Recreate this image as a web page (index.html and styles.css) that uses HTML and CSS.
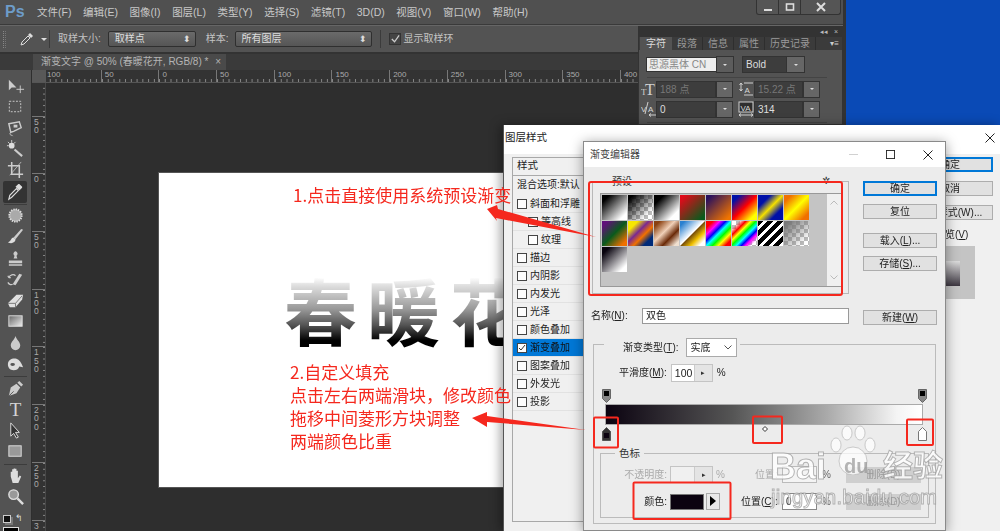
FILE: index.html
```html
<!DOCTYPE html>
<html lang="zh">
<head>
<meta charset="utf-8">
<title>渐变编辑器</title>
<link rel="stylesheet" href="styles.css">
</head>
<body>
<div class="desktop">

  <section class="ps">
    <header class="menubar">
      <span class="logo">Ps</span>
      <nav class="menu">
        <span>文件(F)</span><span>编辑(E)</span><span>图像(I)</span><span>图层(L)</span><span>类型(Y)</span><span>选择(S)</span><span>滤镜(T)</span><span>3D(D)</span><span>视图(V)</span><span>窗口(W)</span><span>帮助(H)</span>
      </nav>
      <div class="winctl">
        <span class="wc"><svg viewBox="0 0 10 10" width="10" height="10"><rect x="1" y="7" width="8" height="2" fill="#ddd"/></svg></span>
        <span class="wc"><svg viewBox="0 0 10 10" width="10" height="10"><rect x="1.5" y="2" width="7" height="6" fill="none" stroke="#ddd" stroke-width="1.6"/></svg></span>
        <span class="wc wc-x"><svg viewBox="0 0 10 10" width="10" height="10"><path d="M1 1l8 8M9 1l-8 8" stroke="#ddd" stroke-width="2"/></svg></span>
      </div>
    </header>

    <div class="optbar">
      <span class="grip"></span>
      <svg class="opt-drop" viewBox="0 0 14 14" width="14" height="14"><path d="M1 13l1-3 6-6 2 2-6 6z" fill="none" stroke="#ddd"/><path d="M8 3l2-2 3 3-2 2z" fill="#ddd"/></svg>
      <span class="caret"></span>
      <span class="vsep"></span>
      <span class="opt-label">取样大小:</span>
      <span class="opt-select opt-size">取样点</span>
      <span class="opt-label opt-sample">样本:</span>
      <span class="opt-select opt-layers">所有图层</span>
      <span class="vsep vsep-b"></span>
      <span class="opt-check"><svg viewBox="0 0 11 11" width="11" height="11"><path d="M2 5l3 3 5-7" fill="none" stroke="#ccc" stroke-width="1.4"/></svg></span>
      <span class="opt-label">显示取样环</span>
    </div>

    <div class="work">
      <aside class="tools">
        <div class="tools-top">▸▸</div>
        <div class="tools-grip"></div>
        <div class="tool"><svg viewBox="0 0 20 20"><path d="M3 4v11l3-3 5 0z" fill="#ccc"/><path d="M15 10v8M11 14h8" stroke="#ccc"/></svg></div>
        <div class="tool"><svg viewBox="0 0 20 20"><rect x="3.5" y="4.5" width="12" height="11" fill="none" stroke="#ccc" stroke-dasharray="2 1.5"/></svg></div>
        <div class="tool"><svg viewBox="0 0 20 20"><path d="M3 5l11-2 2 6-8 4-3 1z" fill="none" stroke="#ccc" stroke-width="1.5"/><path d="M5 14c-2 2 0 3 1 3l1 1" fill="none" stroke="#ccc"/><path d="M8 6h4v3H8z" fill="#ccc"/></svg></div>
        <div class="tool"><svg viewBox="0 0 20 20"><path d="M9 10l8 7" stroke="#ccc" stroke-width="2.2"/><circle cx="6" cy="6" r="3" fill="#ddd"/><path d="M6 0v3M1 6h2M2 2l2 2M10 2L8 4" stroke="#ccc"/></svg></div>
        <div class="tool"><svg viewBox="0 0 20 20"><path d="M6 1v13h12M2 5h12v13" fill="none" stroke="#ccc" stroke-width="1.6"/><path d="M16 1L4 15" stroke="#ccc" stroke-width=".8"/></svg></div>
        <div class="tool tool-on"><svg viewBox="0 0 20 20"><path d="M3 18l1-4 7-7 2 2-7 7z" fill="none" stroke="#ddd" stroke-width="1.2"/><path d="M10 5l3-3 1 0 3 3 0 1-3 3z" fill="#ddd"/></svg></div>
        <div class="tool-sep"></div>
        <div class="tool"><svg viewBox="0 0 20 20"><circle cx="10" cy="10" r="6.5" fill="#aaa" stroke="#ddd" stroke-width="2" stroke-dasharray="1.5 1"/></svg></div>
        <div class="tool"><svg viewBox="0 0 20 20"><path d="M16 2L8 11l2 2 8-10z" fill="#ccc"/><path d="M8 11c-3 0-2 4-6 5 3 2 8 1 8-3z" fill="#ddd"/></svg></div>
        <div class="tool"><svg viewBox="0 0 20 20"><path d="M8 10h4l-1-3a2 2.4 0 1 0-2 0zM3 12h14v3H3zM3 16h14v1.600H3z" fill="#ccc"/></svg></div>
        <div class="tool"><svg viewBox="0 0 20 20"><path d="M14 4L7 15l3 1 7-11z" fill="#ccc"/><path d="M3 8c1-3 5-4 7-2M3 8l-1-2M3 8l2 0M2 13c1 2 3 3 5 2" fill="none" stroke="#ccc" stroke-width="1.3"/></svg></div>
        <div class="tool"><svg viewBox="0 0 20 20"><path d="M2 13l9-9h7l-1 5-7 8H4z" fill="#e0e0e0"/><path d="M2 13h8l7-8M10 13v4" fill="none" stroke="#777"/></svg></div>
        <div class="tool"><svg viewBox="0 0 20 20"><defs><linearGradient id="gt" x1="0" x2="1" y1="0" y2="1"><stop offset="0" stop-color="#666"/><stop offset="1" stop-color="#eee"/></linearGradient></defs><rect x="3" y="4" width="14" height="11" fill="url(#gt)" stroke="#ddd"/></svg></div>
        <div class="tool"><svg viewBox="0 0 20 20"><path d="M10 2c1 4 5 6 5 10a5 5 0 0 1-10 0c0-4 4-6 5-10z" fill="#ccc"/></svg></div>
        <div class="tool"><svg viewBox="0 0 20 20"><path d="M2 10c0-5 5-7 9-6 3 1 5 4 7 9l-4-1c-1 3-3 4-6 4-4 0-6-3-6-6z" fill="#ddd"/><ellipse cx="7" cy="10" rx="2.400" ry="1.500" fill="#555"/></svg></div>
        <div class="tool-sep"></div>
        <div class="tool"><svg viewBox="0 0 20 20"><path d="M3 18l2-9 6-4 4 4-4 6z" fill="#ccc"/><path d="M12 4l2-2 4 4-2 2z" fill="#ccc"/><path d="M3 18l5-5" stroke="#555"/></svg></div>
        <div class="tool"><svg viewBox="0 0 20 20"><text x="10" y="17" class="tool-t">T</text></svg></div>
        <div class="tool"><svg viewBox="0 0 20 20"><path d="M5 2v14l3-3 3 5 2-1-3-5h4z" fill="#333" stroke="#ddd"/></svg></div>
        <div class="tool"><svg viewBox="0 0 20 20"><rect x="3" y="4" width="13" height="11" fill="#999" stroke="#ddd"/></svg></div>
        <div class="tool-sep"></div>
        <div class="tool"><svg viewBox="0 0 20 20"><path d="M5 11V6h1.500v4V3.500H8V9V2.500h1.500V9V3h1.500v7V5h1.500v8l2-3 1.500 1-3 7H7z" fill="#ddd"/></svg></div>
        <div class="tool"><svg viewBox="0 0 20 20"><circle cx="8" cy="8" r="5" fill="#999" stroke="#ddd" stroke-width="1.500"/><path d="M12 12l6 6" stroke="#ddd" stroke-width="2.500"/></svg></div>
        <div class="colors">
          <div class="colors-small"><span class="mini-sw"></span><span class="mini-arrow">↰</span></div>
          <div class="fg"></div>
        </div>
      </aside>

      <div class="stage">
        <div class="rule-h-row">
          <div class="rule-corner"></div>
          <div class="rule-h">
            <span>100</span><span>50</span><span>0</span><span>50</span><span>100</span><span>150</span><span>200</span><span>250</span><span>300</span><span>350</span><span>400</span>
          </div>
        </div>
        <div class="stage-body">
          <div class="rule-v">
            <span></span><span>50</span><span>0</span><span>50</span><span>100</span><span>150</span><span>200</span><span>250</span><span>300</span>
          </div>
          <div class="canvas">
            <div class="doc"><div class="doc-title">春暖花</div></div>
          </div>
        </div>
      </div>
    </div>

    <div class="tabrow"><div class="tab">渐变文字 @ 50% (春暖花开, RGB/8) * <b>×</b></div></div>

    <aside class="charpanel">
      <div class="cp-top">◂◂&nbsp;&nbsp; ×</div>
      <div class="cp-tabs"><span class="cp-on">字符</span><span>段落</span><span>信息</span><span>属性</span><span>历史记录</span><i>▾≡</i></div>
      <div class="cp-row cp-r1">
        <span class="cp-font">思源黑体 CN</span><span class="cp-btn cp-btn-f"></span>
        <span class="cp-weight">Bold</span><span class="cp-btn cp-btn-w"></span>
      </div>
      <div class="cp-rule"></div>
      <div class="cp-row cp-r2">
        <svg class="cp-ic" viewBox="0 0 16 16" width="16" height="16"><text x="0" y="14" class="cp-t-s">T</text><text x="4" y="14" class="cp-t-b">T</text></svg>
        <span class="cp-in cp-dim">188 点</span><span class="cp-btn"></span>
        <svg class="cp-ic cp-ic2" viewBox="0 0 17 16" width="17" height="16"><path d="M3 2v8M1.500 4L3 2l1.500 2M1.500 8L3 10l1.500-2M6 2h9M6 14h9" stroke="#d0d0d0" fill="none"/><text x="6.500" y="12" class="cp-va">A</text></svg>
        <span class="cp-in cp-in2 cp-dim">15.22 点</span><span class="cp-btn"></span>
      </div>
      <div class="cp-row cp-r3">
        <svg class="cp-ic" viewBox="0 0 16 16" width="16" height="16"><text x="0" y="11" class="cp-va">V</text><text x="7" y="11" class="cp-va">A</text><path d="M7 1L4 13M8 14h7M8 14l2-1.500M8 14l2 1.500" stroke="#d0d0d0" fill="none"/></svg>
        <span class="cp-in">0</span><span class="cp-btn"></span>
        <svg class="cp-ic cp-ic2" viewBox="0 0 17 16" width="17" height="16"><rect x="1" y="1" width="14" height="10" fill="#2e2e2e" stroke="#d0d0d0"/><text x="2.500" y="9.500" class="cp-va">VA</text><path d="M1 14h14M1 14l2-1.500M1 14l2 1.500M15 14l-2-1.500M15 14l-2 1.500" stroke="#d0d0d0" fill="none"/></svg>
        <span class="cp-in cp-in2">314</span><span class="cp-btn"></span>
      </div>
      <div class="cp-rule"></div>
    </aside>
  </section>

  <div class="blue"></div>

  <section class="dlg-layer">
    <div class="dl-title"><span>图层样式</span><svg viewBox="0 0 10 10" width="10" height="10"><path d="M.5.5l9 9M9.500.5l-9 9" stroke="#222"/></svg></div>
    <div class="dl-body">
      <div class="dl-list">
        <div class="dl-head">样式</div>
        <div class="dl-blend">混合选项:默认</div>
        <div class="dl-item"><i class="cb"></i>斜面和浮雕</div>
        <div class="dl-item dl-sub"><i class="cb"></i>等高线</div>
        <div class="dl-item dl-sub"><i class="cb"></i>纹理</div>
        <div class="dl-item"><i class="cb"></i>描边</div>
        <div class="dl-item"><i class="cb"></i>内阴影</div>
        <div class="dl-item"><i class="cb"></i>内发光</div>
        <div class="dl-item"><i class="cb"></i>光泽</div>
        <div class="dl-item"><i class="cb"></i>颜色叠加</div>
        <div class="dl-item dl-on"><i class="cb cb-on"><svg viewBox="0 0 8 8" width="8" height="8"><path d="M1 4l2 2 4-5" fill="none" stroke="#333"/></svg></i>渐变叠加</div>
        <div class="dl-item"><i class="cb"></i>图案叠加</div>
        <div class="dl-item"><i class="cb"></i>外发光</div>
        <div class="dl-item"><i class="cb"></i>投影</div>
      </div>
      <div class="dl-side">
        <button class="btn btn-main dl-btn">确定</button>
        <button class="btn dl-btn">取消</button>
        <button class="btn dl-btn">新建样式(W)...</button>
        <div class="dl-prev-label">预览(<u>V</u>)</div>
        <div class="dl-prev"><div class="dl-prev-in"></div></div>
      </div>
    </div>
  </section>

  <section class="dlg-grad">
    <div class="dg-title">
      <span class="dg-name">渐变编辑器</span>
      <svg class="dg-min" viewBox="0 0 10 10" width="9" height="9"><path d="M0 5h10" stroke="#ccc"/></svg>
      <svg class="dg-max" viewBox="0 0 10 10" width="9" height="9"><rect x=".5" y=".5" width="9" height="9" fill="none" stroke="#222"/></svg>
      <svg class="dg-close" viewBox="0 0 10 10" width="10" height="10"><path d="M.5.5l9 9M9.500.5l-9 9" stroke="#222"/></svg>
    </div>
    <div class="dg-body">
      <div class="dg-top">
        <div class="dg-left">
          <div class="presets">
            <span class="presets-label">预设</span>
            <span class="presets-gear">✲</span>
            <div class="presets-list">
              <div class="swatches">
                <i class="s s1"></i><i class="s s2"></i><i class="s s3"></i><i class="s s4"></i><i class="s s5"></i><i class="s s6"></i><i class="s s7"></i><i class="s s8"></i>
                <i class="s s9"></i><i class="s s10"></i><i class="s s11"></i><i class="s s12"></i><i class="s s13"></i><i class="s s14"></i><i class="s s15"></i><i class="s s16"></i>
                <i class="s s17"></i>
              </div>
              <div class="scroll">
                <svg viewBox="0 0 8 5" width="8" height="5"><path d="M.5 4.500L4 1l3.500 3.500" fill="none" stroke="#bbb"/></svg>
                <svg viewBox="0 0 8 5" width="8" height="5"><path d="M.5.500L4 4 7.500.500" fill="none" stroke="#bbb"/></svg>
              </div>
            </div>
          </div>
          <div class="name-row">
            <span>名称(<u>N</u>):</span>
            <span class="name-in">双色</span>
          </div>
        </div>
        <div class="dg-right">
          <button class="btn btn-main">确定</button>
          <button class="btn b-reset">复位</button>
          <button class="btn b-load">载入(<u>L</u>)...</button>
          <button class="btn b-save">存储(<u>S</u>)...</button>
          <button class="btn b-new">新建(<u>W</u>)</button>
        </div>
      </div>

      <div class="grad-group">
        <div class="type-row">
          <span>渐变类型(<u>T</u>):</span>
          <span class="type-select">实底<svg viewBox="0 0 8 5" width="8" height="5"><path d="M.5.5L4 4 7.500.5" fill="none" stroke="#555"/></svg></span>
        </div>
        <div class="smooth-row">
          <span>平滑度(<u>M</u>):</span>
          <span class="spin"><span class="spin-v">100</span><span class="spin-b">▸</span></span>
          <span>%</span>
        </div>
        <div class="slider">
          <svg class="stop stop-tl" viewBox="0 0 9 14" width="9" height="14"><path d="M.5.5h8v9l-4 4-4-4z" fill="#888" stroke="#666"/><rect x="2" y="2" width="5" height="5" fill="#000"/></svg>
          <svg class="stop stop-tr" viewBox="0 0 9 14" width="9" height="14"><path d="M.5.5h8v9l-4 4-4-4z" fill="#888" stroke="#666"/><rect x="2" y="2" width="5" height="5" fill="#000"/></svg>
          <div class="gbar"></div>
          <svg class="stop stop-bl" viewBox="0 0 9 14" width="9" height="14"><path d="M.5 13.500v-9l4-4 4 4v9z" fill="#333" stroke="#555"/><rect x="2" y="6" width="5" height="5" fill="#0b0310"/></svg>
          <svg class="stop stop-br" viewBox="0 0 9 14" width="9" height="14"><path d="M.5 13.500v-9l4-4 4 4v9z" fill="#fff" stroke="#777"/></svg>
          <svg class="stop stop-mid" viewBox="0 0 6 6" width="6" height="6"><path d="M3 .5L5.500 3 3 5.500.5 3z" fill="#fff" stroke="#333"/></svg>
        </div>
        <div class="stops-group">
          <div class="stops-label">色标</div>
          <div class="stops-row stops-dim">
            <span class="sr-label">不透明度:</span>
            <span class="spin spin-d"><span class="spin-v"></span><span class="spin-b">▸</span></span>
            <span class="sr-pct">%</span>
            <span class="sr-pos">位置:</span>
            <span class="sr-in"></span>
            <span class="sr-pct2">%</span>
            <span class="sr-del">删除(D)</span>
          </div>
          <div class="stops-row">
            <span class="sr-label sr-color">颜色:</span>
            <span class="color-sw"></span>
            <span class="color-arrow"></span>
            <span class="sr-pos sr-pos-on">位置(<u>C</u>):</span>
            <span class="sr-in sr-in-on">0</span>
            <span class="sr-pct2">%</span>
            <span class="sr-del">删除(D)</span>
          </div>
        </div>
      </div>
    </div>
  </section>

  <div class="notes">
    <p class="note note-1">1.点击直接使用系统预设渐变</p>
    <p class="note note-2">2.自定义填充<br>点击左右两端滑块，修改颜色<br>拖移中间菱形方块调整<br>两端颜色比重</p>
    <svg class="marks" viewBox="0 0 1000 531" width="1000" height="531">
      <g fill="none" stroke="#f5281e" stroke-width="2">
        <rect x="589" y="182" width="253" height="113" rx="2"/>
        <rect x="594" y="417.500" width="24" height="30" rx="1"/>
        <rect x="753" y="416.500" width="29" height="26.500" rx="1"/>
        <rect x="907" y="419.500" width="26" height="25.500" rx="1"/>
        <rect x="633.500" y="482.500" width="97" height="36.500" rx="1"/>
      </g>
      <g fill="#f5281e">
        <path d="M487 209l10-4 1 4 98 28-100-19 1 3z"/>
        <path d="M472 418l15-6 0 4 99 14-99-8 0 5z"/>
      </g>
    </svg>
    <div class="wm">
      <svg class="wm-paw" viewBox="0 0 48 50" width="48" height="50">
        <g fill="rgba(255,255,255,.72)" stroke="rgba(165,165,165,.55)">
          <ellipse cx="8" cy="20" rx="5" ry="7"/>
          <ellipse cx="19" cy="8" rx="5" ry="7"/>
          <ellipse cx="32" cy="8" rx="5" ry="7"/>
          <ellipse cx="42" cy="20" rx="5" ry="7"/>
          <circle cx="25" cy="36" r="14"/>
        </g>
      </svg>
      <span class="wm-bai">Bai</span>
      <span class="wm-du">du</span>
      <span class="wm-jy">经验</span>
      <span class="wm-url">jingyan.baidu.com</span>
    </div>
  </div>
</div>
</body>
</html>
```

FILE: styles.css
```css
* { box-sizing: border-box; }
html, body { margin: 0; height: 100%; overflow: hidden; }
body { font: 10px/1.2 "Liberation Sans", "Noto Sans CJK SC", sans-serif; color: #222; background: #0a4ab6; }
.desktop { position: relative; width: 1000px; height: 531px; overflow: hidden; filter: blur(.45px); }
u { text-decoration: underline; }
p { margin: 0; }

/* desktop background */
.blue { position: absolute; left: 846px; top: 0; width: 154px; height: 125px; background: #0a4ab6; }

/* Photoshop window */
.ps { position: absolute; left: 0; top: 0; width: 846px; height: 531px; background: #535353; color: #c4c4c4; border-right: 3px solid #333; display: flex; flex-direction: column; overflow: hidden; }
.menubar { height: 25px; background: #505050; display: flex; align-items: center; border-bottom: 1px solid #3a3a3a; flex: none; }
.logo { width: 37px; padding-left: 5px; font: bold 16px/1 "Liberation Sans", sans-serif; color: #6d9cc9; }
.menu { display: flex; gap: 11.6px; font-size: 10.5px; color: #c8c8c8; }
.winctl { margin-left: auto; margin-right: 2px; margin-top: -10px; height: 15px; display: flex; border: 1px solid #333; border-top: 0; border-radius: 0 0 3px 3px; background: #555; }
.wc { width: 22px; display: flex; align-items: center; justify-content: center; border-right: 1px solid #333; }
.wc-x { width: 39px; border: 0; }

.optbar { height: 29px; flex: none; display: flex; align-items: center; border-top: 1px solid #666; border-bottom: 2px solid #333; background: #535353; }
.grip { width: 3px; height: 17px; margin-left: 3px; border-left: 1px dotted #888; border-right: 1px dotted #777; }
.opt-drop { margin-left: 14px; }
.caret { width: 0; height: 0; margin-left: 7px; border: 3px solid transparent; border-top-color: #ddd; border-bottom: 0; }
.vsep { width: 1px; height: 18px; margin: 0 8px 0 2px; background: #3b3b3b; }
.vsep-b { margin: 0 8px; }
.opt-label { color: #c4c4c4; }
.opt-select { height: 16px; margin-left: 7px; padding-left: 6px; line-height: 14px; background: linear-gradient(#6a6a6a, #555); border: 1px solid #2f2f2f; border-radius: 2px; color: #ddd; position: relative; }
.opt-select::after { content: "⬍"; position: absolute; right: 4px; top: 0; font-size: 9px; color: #ddd; }
.opt-size { width: 88px; }
.opt-sample { margin-left: 10px; }
.opt-layers { width: 137px; margin-left: 6px; }
.opt-check { width: 12px; height: 12px; margin-right: 3px; background: #444; border: 1px solid #333; display: flex; }

.work { flex: 1; display: flex; min-height: 0; }
.tools { width: 32px; flex: none; background: #535353; border-right: 1px solid #2e2e2e; }
.tools-top { height: 8px; background: #2f2f2f; font-size: 5px; line-height: 7px; color: #bbb; padding-left: 3px; margin-bottom: 2px; margin-top: 0; }
.tools-grip { height: 3px; margin: 0 7px 8px; border-top: 1px dotted #888; border-bottom: 1px dotted #777; }
.tool { height: 21.25px; display: flex; align-items: center; justify-content: center; }
.tool svg { width: 19px; height: 19px; }
.tool-t { font: 20px "Liberation Serif", serif; fill: #d4d4d4; text-anchor: middle; }
.tool-on { margin: 0 4px 0 3px; background: #333; border-radius: 2px; }
.tool-sep { height: 1px; margin: 1px 4px .5px; background: #3c3c3c; }
.colors { padding: 6px 0 0 3px; }
.colors-small { height: 10px; display: flex; align-items: center; gap: 4px; }
.mini-sw { width: 8px; height: 8px; background: #111; border: 1px solid #ccc; box-shadow: 2px 2px 0 #777; }
.mini-arrow { font-size: 9px; color: #ddd; }
.fg { width: 16px; height: 14px; margin-top: 3px; background: #000; border: 1px solid #ddd; }

.stage { flex: 1; min-width: 0; display: flex; flex-direction: column; margin-top: 16px; background: #2e2e2e; }
.rule-h-row { height: 13px; flex: none; display: flex; background: #333; border-bottom: 1px solid #555; }
.rule-corner { width: 14px; background: #585858; flex: none; }
.rule-h { flex: 1; display: flex; overflow: hidden; margin-left: 0; }
.rule-h span { flex: 0 0 57.7px; padding-left: 3px; margin-left: 0; font-size: 8px; line-height: 9px; color: #aaa; border-left: 1px solid #777; background: linear-gradient(to right, #888 1px, transparent 1px) left bottom / 5.77px 3px repeat-x; }
.rule-h span:first-child { margin-left: -3px; }
.stage-body { flex: 1; min-height: 0; display: flex; }
.rule-v { width: 14px; flex: none; background: #333; border-right: 1px solid #484848; overflow: hidden; }
.rule-v span { display: block; height: 57.7px; width: 14px; padding: 1px 5px 0 2px; font-size: 8.500px; line-height: 8.300px; color: #aaa; word-break: break-all; border-top: 1px solid #777; background: linear-gradient(#888 1px, transparent 1px) right top / 3px 5.77px repeat-y; }
.rule-v span:first-child { margin-top: -25px; }
.canvas { flex: 1; min-width: 0; padding: 90px 0 0 113px; background: #2e2e2e; }
.doc { width: 600px; height: 314px; background: #fff; padding: 92px 0 0 125px; white-space: nowrap; box-shadow: 0 0 0 1px #555; }
.doc-title { font: 700 73px/1.2 "Noto Sans CJK SC", sans-serif; letter-spacing: 10px; width: max-content; color: transparent; background: linear-gradient(#fff 14%, #ddd 24%, #999 50%, #555 68%, #000 86%); -webkit-background-clip: text; background-clip: text; }

.tabrow { position: absolute; left: 0; top: 54px; width: 846px; height: 16px; background: #3a3a3a; padding-left: 33px; }
.tab { width: 193px; height: 16px; background: #4a4a4a; color: #b4b4b4; font-size: 10px; line-height: 16px; padding-left: 8px; white-space: nowrap; overflow: hidden; }
.tab b { font-weight: 400; margin-left: 4px; }

/* character panel */
.charpanel { position: absolute; left: 638px; top: 26px; width: 205px; height: 99px; background: #535353; border: 1px solid #333; border-top: 0; }
.cp-top { height: 11px; background: #333; color: #bbb; font-size: 7px; line-height: 12px; text-align: right; padding-right: 4px; }
.cp-tabs { height: 13px; background: #3b3b3b; display: flex; font-size: 10px; line-height: 13px; color: #9a9a9a; padding-left: 1px; }
.cp-tabs span { padding: 0 5px; border-right: 1px solid #2e2e2e; }
.cp-tabs .cp-on { background: #535353; color: #ddd; padding: 0 6px; border: 0; }
.cp-tabs i { margin-left: auto; padding-right: 3px; font-style: normal; color: #ccc; font-size: 8px; }
.cp-row { display: flex; align-items: center; }
.cp-r1 { margin: 7px 0 0 8px; height: 15px; }
.cp-font { width: 70px; height: 13px; background: #eee; color: #888; font-size: 10px; line-height: 13px; padding-left: 2px; outline: 1px solid #333; }
.cp-btn { width: 15px; height: 15px; margin-left: 2px; background: #666; flex: none; display: flex; align-items: center; justify-content: center; outline: 1px solid #333; }
.cp-btn::after { content: ""; border: 2.500px solid transparent; border-top-color: #ddd; border-bottom: 0; }
.cp-btn-f { width: 16px; background: #5c5c5c; margin: 0 10px 0 0; }
.cp-btn-w { width: 17px; margin-left: 0; }
.cp-weight { width: 44px; height: 15px; background: #3d3d3d; color: #ddd; font-size: 10px; line-height: 15px; padding-left: 3px; outline: 1px solid #333; }
.cp-rule { height: 1px; margin: 5px 15px 0 8px; background: #444; }
.cp-r2 { margin: 3px 0 0 2px; height: 16px; }
.cp-r3 { margin: 4px 0 0 2px; height: 16px; }
.cp-ic { flex: none; }
.cp-ic2 { margin-left: 6px; }
.cp-t-s { font: 9px "Liberation Serif", serif; fill: #d0d0d0; }
.cp-t-b { font: 16px "Liberation Serif", serif; fill: #d0d0d0; }
.cp-va { font: 8px "Liberation Sans", sans-serif; fill: #d8d8d8; }
.cp-in { width: 58px; height: 15px; background: #3d3d3d; color: #ddd; font-size: 10px; line-height: 15px; padding-left: 3px; outline: 1px solid #333; }
.cp-in2 { width: 47px; }
.cp-in.cp-dim { color: #777; }

/* windows dialogs */
.dlg-layer { position: absolute; left: 503px; top: 125px; width: 497px; height: 406px; background: #f0f0f0; box-shadow: -3px 0 10px rgba(0,0,0,.35); border-left: 1px solid #555; }
.dl-title { height: 29px; background: #fff; display: flex; align-items: center; justify-content: space-between; padding: 0 5px 4px 1px; color: #222; font-size: 10.500px; }
.dl-body { display: flex; padding: 3px 0 0 8px; }
.dl-list { width: 110px; height: 365px; border: 1px solid #a8a8a8; background: #f0f0f0; flex: none; }
.dl-head { height: 18px; padding: 1px 0 0 4px; border-bottom: 1px solid #aaa; font-size: 10.500px; }
.dl-blend { height: 19px; padding: 3px 0 0 4px; white-space: nowrap; overflow: hidden; }
.dl-item { height: 18px; display: flex; align-items: center; gap: 3px; padding-left: 4px; border-bottom: 1px solid #e2e2e2; white-space: nowrap; }
.dl-sub { padding-left: 15px; }
.dl-on { background: #0078d7; color: #111; }
.cb { width: 10px; height: 10px; background: #fdfdfd; border: 1px solid #444; flex: none; display: flex; }
.dl-side { margin-left: 285px; width: 86px; display: flex; flex-direction: column; }
.dl-btn { margin-bottom: 9px; height: 14px; }
.dl-prev-label { margin-top: 0; padding-left: 28px; white-space: nowrap; }
.dl-prev { width: 30px; height: 53px; margin: 5px 0 0 38px; background: #c4c4c4; padding-top: 15px; }
.dl-prev-in { width: 15px; height: 25px; background: linear-gradient(#ddd, #3c3640); }

.btn { display: block; width: 74px; height: 15px; padding: 0; font: 10px/13px "Liberation Sans", "Noto Sans CJK SC", sans-serif; color: #222; background: #e1e1e1; border: 1px solid #adadad; white-space: nowrap; }
.btn-main { border: 2px solid #0078d7; line-height: 11px; }
.dl-btn { width: 86px; }

.dlg-grad { position: absolute; left: 583px; top: 141px; width: 363px; height: 390px; background: #ececec; border: 1px solid #8a8a8a; box-shadow: 0 2px 12px rgba(0,0,0,.4); }
.dg-title { height: 25px; background: #fff; display: flex; align-items: center; padding: 0 0 0 6px; }
.dg-name { color: #444; font-size: 10px; }
.dg-min { margin-left: 209px; }
.dg-max { margin-left: 28px; }
.dg-close { margin-left: 28px; }
.dg-body { padding: 0 9px 0 8px; }
.dg-top { display: flex; gap: 14px; }
.dg-left { width: 257px; flex: none; }
.presets { position: relative; margin-top: 14px; height: 113px; border: 1px solid #b8b8b8; padding: 11px 7px 0 7px; }
.presets-label { position: absolute; left: 16px; top: -6px; padding: 0 3px; background: #ececec; font-size: 10px; color: #333; }
.presets-gear { position: absolute; left: 229px; top: -7px; font-size: 10px; color: #333; background: #ececec; }
.presets-list { display: flex; width: 241px; height: 94px; background: #c4c4c4; border: 1px solid #999; border-right: 0; }
.swatches { flex: 1; display: grid; grid-template-columns: repeat(8, 26px); grid-auto-rows: 26px; align-content: start; }
.scroll { width: 14px; padding: 6px 0; background: #f0f0f0; display: flex; flex-direction: column; justify-content: space-between; align-items: center; }
.s { display: block; width: 25px; height: 25px; margin: .5px; }
.s1 { background: linear-gradient(135deg, #000 15%, #fff 85%); }
.s2 { background: linear-gradient(135deg, #000 10%, transparent 80%), repeating-conic-gradient(#bbb 0 25%, #fff 0 50%) 0 0 / 8px 8px; }
.s3 { background: linear-gradient(135deg, #000 20%, #fff 80%); }
.s4 { background: linear-gradient(135deg, #e00a1a 10%, #0a5a1c 90%); }
.s5 { background: linear-gradient(135deg, #28105e 10%, #f07400 90%); }
.s6 { background: linear-gradient(135deg, #0010a8 15%, #f00 50%, #ff0 85%); }
.s7 { background: linear-gradient(135deg, #0010a8 25%, #f4e000 50%, #0010a8 75%); }
.s8 { background: linear-gradient(135deg, #f07000 15%, #ff0 50%, #f07000 85%); }
.s9 { background: linear-gradient(135deg, #60107a 12%, #0a5a1c 50%, #f07000 88%); }
.s10 { background: linear-gradient(135deg, #f6e600 20%, #7a2a90 42%, #f07000 60%, #002a78 80%); }
.s11 { background: linear-gradient(135deg, #8a4010 12%, #f0d0b8 42%, #6a2a08 66%, #f0e0d0 90%); }
.s12 { background: linear-gradient(135deg, #2a80d0 10%, #fff 48%, #7a5008 52%, #f0c000 70%, #fff 88%); }
.s13 { background: linear-gradient(135deg, #f00 14%, #f0f 28%, #00f 40%, #0ff 50%, #0f0 62%, #ff0 74%, #f00 88%); }
.s14 { background: linear-gradient(135deg, transparent 14%, #f00 28%, #ff0 38%, #0f0 48%, #0ff 58%, #00f 68%, #f0f 76%, transparent 88%), repeating-conic-gradient(#bbb 0 25%, #fff 0 50%) 0 0 / 8px 8px; }
.s15 { background: repeating-linear-gradient(135deg, #000 0 4px, #fff 4px 7px); }
.s16 { background: linear-gradient(135deg, #777 10%, transparent 85%), repeating-conic-gradient(#bbb 0 25%, #fff 0 50%) 0 0 / 8px 8px; }
.s17 { background: linear-gradient(135deg, #08030e 15%, #fff 85%); }

.name-row { display: flex; align-items: center; margin: 14px 0 0 -1px; height: 16px; }
.name-in { width: 207px; margin-left: auto; height: 16px; padding-left: 3px; line-height: 14px; background: #fff; border: 1px solid #999; }
.dg-right { padding-top: 14px; }
.b-reset { margin-top: 8px; }
.b-load { margin-top: 14px; }
.b-save { margin-top: 8px; }
.b-new { margin-top: 39px; }

.grad-group { height: 180px; margin: 19px 0 0 1px; width: 343px; border: 1px solid #bbb; }
.type-row { display: flex; align-items: center; gap: 7px; margin: -7px 0 0 10px; padding: 0 5px 0 19px; height: 19px; width: 136px; background: #ececec; white-space: nowrap; }
.type-select { width: 51px; height: 19px; padding: 0 4px; line-height: 17px; background: #fff; border: 1px solid #aaa; display: flex; align-items: center; justify-content: space-between; flex: none; }
.smooth-row { display: flex; align-items: center; gap: 4px; margin: 7px 0 0 25px; height: 18px; }
.spin { display: flex; width: 42px; height: 18px; border: 1px solid #c4c4c4; background: #fff; }
.spin-v { flex: 1; padding-left: 3px; line-height: 16px; font-size: 10.500px; }
.spin-b { width: 18px; background: #e4e4e4; font-size: 7px; line-height: 16px; text-align: center; color: #333; border-left: 1px solid #ccc; }
.slider { position: relative; height: 71px; padding: 22px 12px 0 11px; }
.gbar { height: 21px; background: linear-gradient(to right, #0b0310, #555 40%, #aaa 70%, #f4f4f4 92%, #fff); border: 1px solid #aaa; }
.stop { position: absolute; }
.stop-tl { left: 8px; top: 7px; }
.stop-tr { left: 324px; top: 7px; }
.stop-bl { left: 8px; top: 45px; }
.stop-br { left: 324px; top: 45px; }
.stop-mid { left: 168px; top: 44px; }
.stops-group { position: relative; height: 65px; margin: 0 6px; border: 1px solid #bbb; }
.stops-label { position: absolute; left: 14px; top: -7px; padding: 0 4px; background: #ececec; font-size: 10.500px; color: #333; }
.stops-row { position: absolute; left: 0; top: 12px; width: 100%; height: 17px; display: flex; align-items: center; white-space: nowrap; }
.stops-row + .stops-row { top: 39px; }
.stops-dim { color: #aaa; }
.sr-label { width: 66px; text-align: right; margin-right: 3px; flex: none; }
.sr-color { color: #222; }
.spin-d { width: 43px; height: 17px; background: #f0f0f0; }
.sr-pct { margin-left: 3px; }
.sr-pos { position: absolute; left: 154px; }
.sr-pos-on { left: 140px; color: #222; }
.sr-in { position: absolute; left: 181px; width: 35px; height: 17px; border: 1px solid #bbb; background: #f4f4f4; }
.sr-in-on { background: #fff; border-color: #888; padding-left: 3px; line-height: 15px; color: #222; }
.sr-pct2 { position: absolute; left: 221px; color: #666; }
.sr-del { position: absolute; left: 245px; width: 75px; height: 16px; background: #cfcfcf; color: #999; text-align: center; line-height: 15px; }
.color-sw { width: 34px; height: 16px; background: #0b0310; border: 1px solid #777; flex: none; }
.color-arrow { width: 14px; height: 17px; margin-left: 2px; background: #e8e8e8; border: 1px solid #aaa; position: relative; flex: none; }
.color-arrow::after { content: ""; position: absolute; left: 3px; top: 2px; border: 5.500px solid transparent; border-left: 6px solid #000; border-right: 0; }

/* annotation overlay */
.notes { position: absolute; inset: 0; pointer-events: none; }
.note { position: absolute; color: #f5281e; font-family: "Noto Sans CJK SC", sans-serif; font-size: 17px; white-space: nowrap; }
.note-1 { left: 293px; top: 183px; line-height: 24px; }
.note-2 { left: 290px; top: 360px; line-height: 23px; }
.marks { position: absolute; left: 0; top: 0; }
.wm { position: absolute; left: 770px; top: 425px; width: 190px; height: 85px; }
.wm span { position: absolute; color: rgba(255,255,255,.8); -webkit-text-stroke: 1px rgba(150,150,150,.7); font-family: "Liberation Sans", "Noto Sans CJK SC", sans-serif; font-weight: 700; white-space: nowrap; }
.wm-paw { position: absolute; left: 58px; top: 0; }
.wm .wm-bai { left: 0; top: 22px; font-size: 36px; line-height: 40px; }
.wm .wm-du { left: 74px; top: 30px; font-size: 20px; line-height: 22px; color: rgba(150,150,150,.7); -webkit-text-stroke: 0; }
.wm .wm-jy { left: 113px; top: 23px; font-size: 30px; line-height: 36px; }
.wm .wm-url { left: 1px; top: 60px; font-size: 20px; font-weight: 400; line-height: 24px; letter-spacing: .3px; }
```
